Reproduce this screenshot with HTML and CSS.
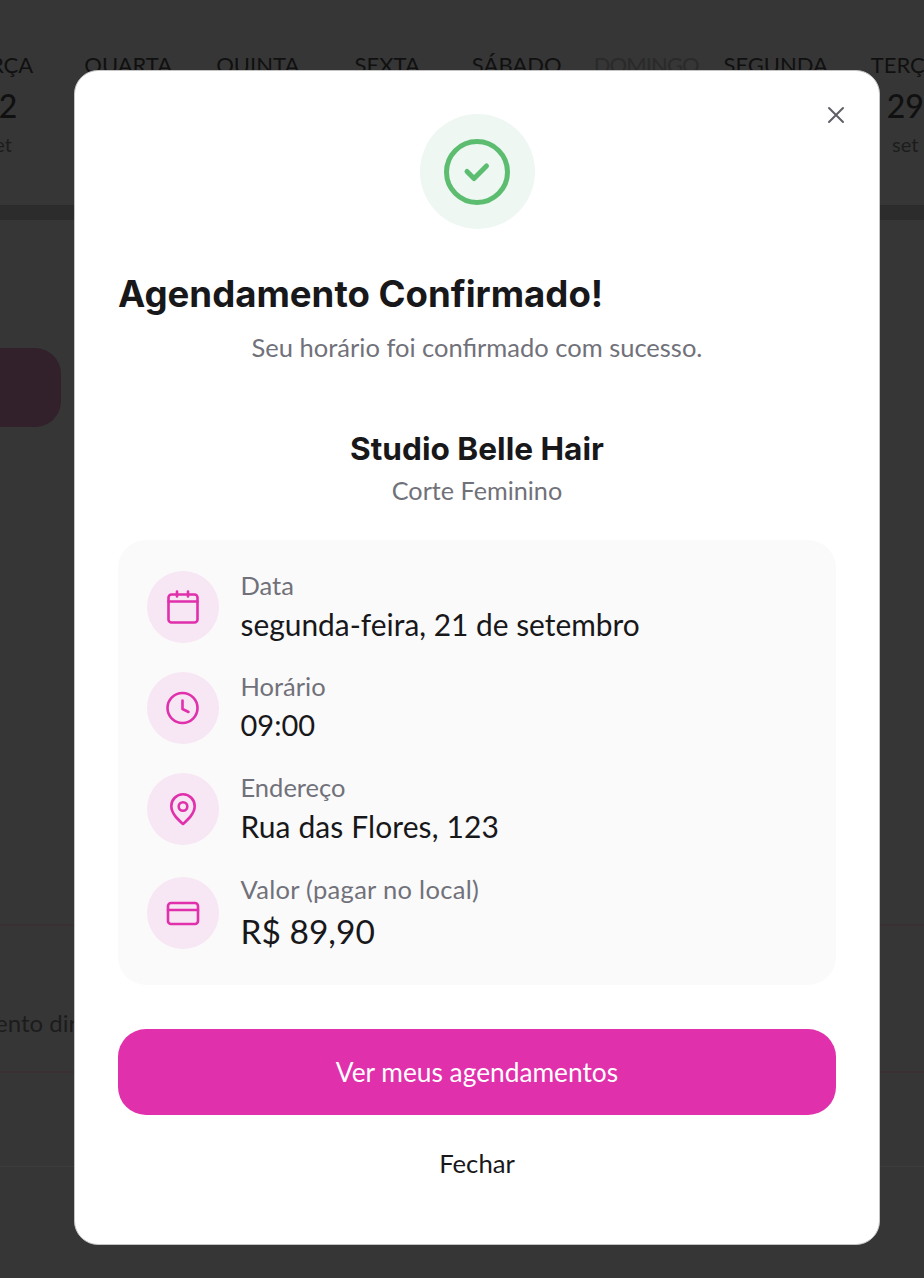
FILE: index.html
```html
<!DOCTYPE html>
<html lang="pt-BR">
<head>
<meta charset="utf-8">
<title>Agendamento Confirmado</title>
<link rel="stylesheet" href="styles.css">
</head>
<body>
<div class="page">
  <div class="days">
    <div class="day"><span class="wd">TERÇA</span><span class="num">22</span><span class="mon">set</span></div>
    <div class="day"><span class="wd">QUARTA</span><span class="num">23</span><span class="mon">set</span></div>
    <div class="day"><span class="wd">QUINTA</span><span class="num">24</span><span class="mon">set</span></div>
    <div class="day"><span class="wd">SEXTA</span><span class="num">25</span><span class="mon">set</span></div>
    <div class="day"><span class="wd">SÁBADO</span><span class="num">26</span><span class="mon">set</span></div>
    <div class="day off"><span class="wd">DOMINGO</span><span class="num">27</span><span class="mon">set</span></div>
    <div class="day"><span class="wd">SEGUNDA</span><span class="num">28</span><span class="mon">set</span></div>
    <div class="day"><span class="wd">TERÇA</span><span class="num">29</span><span class="mon">set</span></div>
  </div>
  <div class="band"></div>
  <div class="slot"></div>
  <div class="line line-a"></div>
  <div class="note">Pagamento direto no local</div>
  <div class="line line-b"></div>
  <div class="line line-c"></div>
</div>

<div class="modal">
  <button class="close" aria-label="Fechar">
    <svg width="24" height="24" viewBox="0 0 24 24" fill="none" stroke="#5f5f66" stroke-width="2" stroke-linecap="round"><path d="M5 5l14 14M19 5L5 19"/></svg>
  </button>
  <div class="success">
    <svg width="70" height="70" viewBox="0 0 70 70" fill="none" stroke="#5cbd70" stroke-linecap="round" stroke-linejoin="round"><circle cx="35" cy="35" r="30.5" stroke-width="5"/><path d="M25 34.500l7 7L44.500 29" stroke-width="5"/></svg>
  </div>
  <h1 class="title">Agendamento Confirmado!</h1>
  <p class="sub">Seu horário foi confirmado com sucesso.</p>
  <h2 class="studio">Studio Belle Hair</h2>
  <p class="service">Corte Feminino</p>
  <div class="panel">
    <div class="row">
      <span class="ico"><svg width="36" height="36" viewBox="0 0 36 36" fill="none" stroke="#e030ab" stroke-width="2.600" stroke-linecap="round" stroke-linejoin="round"><rect x="3.500" y="5.500" width="29" height="28" rx="3"/><path d="M3.500 12.500h29M12 2.500v5M23 2.500v5"/></svg></span>
      <div class="txt"><span class="lbl">Data</span><span class="val wide">segunda-feira, 21 de setembro</span></div>
    </div>
    <div class="row">
      <span class="ico"><svg width="36" height="36" viewBox="0 0 36 36" fill="none" stroke="#e030ab" stroke-width="2.600" stroke-linecap="round" stroke-linejoin="round"><circle cx="17.500" cy="18" r="15"/><path d="M17.500 10.500v8.500l6 3"/></svg></span>
      <div class="txt"><span class="lbl">Horário</span><span class="val">09:00</span></div>
    </div>
    <div class="row">
      <span class="ico"><svg width="36" height="36" viewBox="0 0 36 36" fill="none" stroke="#e030ab" stroke-width="2.600" stroke-linecap="round" stroke-linejoin="round"><path d="M18 33C13 28.500 6.300 22.500 6.300 15a11.700 11.700 0 0 1 23.400 0C29.700 22.500 23 28.500 18 33z"/><circle cx="18" cy="15.500" r="4.300"/></svg></span>
      <div class="txt"><span class="lbl">Endereço</span><span class="val street">Rua das Flores, 123</span></div>
    </div>
    <div class="row row-last">
      <span class="ico"><svg width="36" height="36" viewBox="0 0 36 36" fill="none" stroke="#e030ab" stroke-width="2.600" stroke-linecap="round" stroke-linejoin="round"><rect x="3" y="8" width="30" height="21" rx="3"/><path d="M3 15h30"/></svg></span>
      <div class="txt"><span class="lbl wide-lbl">Valor (pagar no local)</span><span class="val big">R$ 89,90</span></div>
    </div>
  </div>
  <button class="cta">Ver meus agendamentos</button>
  <button class="ghost">Fechar</button>
</div>
</body>
</html>
```
FILE: styles.css
```css
* { box-sizing: border-box; }
html, body { margin: 0; padding: 0; }
body {
  width: 924px;
  height: 1278px;
  overflow: hidden;
  background: #363636;
  font-family: "Lato", "Noto Sans", sans-serif;
  position: relative;
}
.page { height: 1278px; overflow: hidden; display: flex; flex-direction: column; }
.days {
  height: 205px;
  padding-top: 52px;
  margin-left: -66px;
  display: flex;
  flex: none;
  width: 1100px;
  color: #101010;
}
.day { width: 129.500px; display: flex; flex-direction: column; align-items: center; flex: none; }
.day.off { color: #2a2a2a; }
.day.off .wd { letter-spacing: -0.9px; }
.wd { font-size: 22px; line-height: 26px; }
.num { font-size: 32px; line-height: 40px; margin-top: 8px; font-weight: 500; }
.mon { font-size: 20px; line-height: 26px; margin-top: 5px; color: #1c1c1c; }
.band { height: 15px; background: #2c2c2c; flex: none; }
.slot {
  width: 100px; height: 79px; margin: 128px 0 0 -39px;
  background: #32202b; border-radius: 26px; flex: none;
}
.line { height: 2px; flex: none; background: #3a3032; }
.line-a { margin-top: 497px; }
.note { margin: 82px 0 0 -75px; font-size: 24px; line-height: 30px; color: #1c1c1c; white-space: nowrap; flex: none; }
.line-b { margin-top: 33px; }
.line-c { margin-top: 93px; height: 1px; background: #3d3d3d; }

.modal {
  position: absolute;
  left: 74px; top: 70px;
  width: 806px; height: 1175px;
  background: #fff;
  border: 1px solid #c4c4c4;
  border-radius: 24px;
  padding: 43px 43px 0;
  display: flex;
  flex-direction: column;
  align-items: center;
}
.close {
  position: absolute; right: 31px; top: 32px;
  width: 24px; height: 24px; padding: 0;
  border: 0; background: none; display: flex;
}
.success {
  width: 115px; height: 115px; border-radius: 50%;
  background: #eef7f1;
  display: flex; align-items: center; justify-content: center;
  flex: none;
}
.title {
  align-self: flex-start;
  margin: 42px 0 0;
  font-family: "Inter", sans-serif;
  font-size: 36.600px; line-height: 46px; font-weight: 700;
  color: #18181b;
  white-space: nowrap;
}
.sub { margin: 14px 0 0; font-size: 25.500px; line-height: 32px; color: #71717a; }
.studio {
  margin: 65px 0 0;
  font-family: "Inter", sans-serif;
  font-size: 31.600px; line-height: 42px; font-weight: 700;
  color: #18181b;
}
.service { margin: 4px 0 0; font-size: 25.200px; line-height: 32px; color: #71717a; }
.panel {
  width: 718px; margin-top: 34px;
  background: #fafafa; border-radius: 28px;
  padding: 29px 29px 32px;
  display: flex; flex-direction: column; gap: 26px;
  flex: none;
}
.row { display: flex; align-items: center; gap: 22px; }
.row-last { margin-top: 1px; }
.ico {
  width: 72px; height: 72px; border-radius: 50%;
  background: #f7e6f3;
  display: flex; align-items: center; justify-content: center; flex: none;
}
.txt { display: flex; flex-direction: column; gap: 3px; margin-left: -0.5px; }
.lbl { font-size: 25.500px; line-height: 32px; color: #71717a; }
.wide-lbl { letter-spacing: 0.3px; }
.val { font-size: 29px; line-height: 40px; color: #18181b; }
.val.wide { font-size: 29.900px; }
.val.street { font-size: 30px; letter-spacing: 0.1px; }
.val.big { font-size: 33.500px; line-height: 44px; margin-top: 1px; }
.cta {
  width: 718px; height: 86px; margin-top: 44px; flex: none;
  border: 0; border-radius: 28px;
  background: #e030ab; color: #fff;
  font: 26.300px/30px "Lato", sans-serif;
}
.ghost {
  margin-top: 30px; border: 0; background: none; padding: 0;
  font: 25.700px/36px "Lato", sans-serif; color: #18181b;
}
```
